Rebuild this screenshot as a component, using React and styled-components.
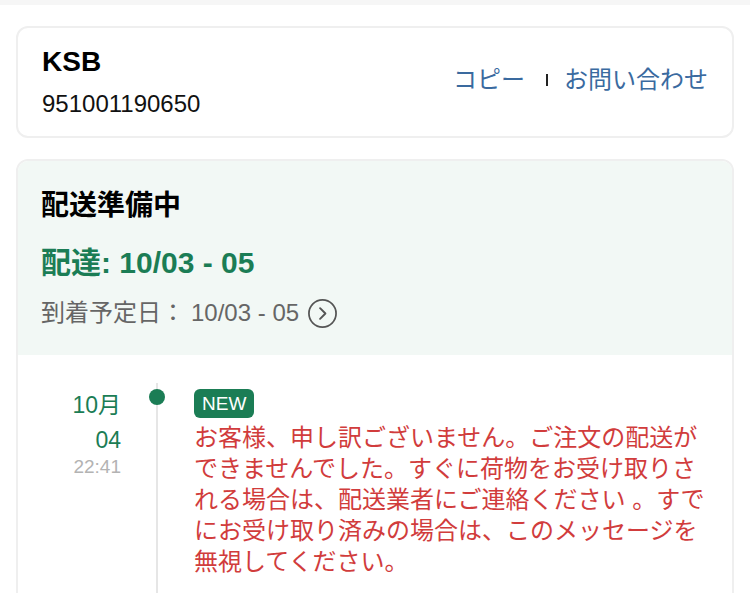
import React from "react";
import styled, { createGlobalStyle } from "styled-components";

const GlobalStyle = createGlobalStyle`
  * { box-sizing: border-box; }
  body {
    margin: 0;
    background: #ffffff;
    font-family: "Liberation Sans", "Noto Sans CJK JP", sans-serif;
    color: #111;
  }
`;

const green = "#1b7d55";

const TopStrip = styled.div`
  height: 5px;
  background: #f6f6f6;
`;

const Page = styled.main`
  padding: 21px 16px 0;
  display: flex;
  flex-direction: column;
  gap: 21px;
`;

const Card = styled.section`
  border: 2px solid #efefef;
  border-radius: 12px;
  overflow: hidden;
  background: #fff;
`;

const CarrierCard = styled(Card)`
  display: flex;
  align-items: center;
  justify-content: space-between;
  padding: 17px 24px;
`;

const CarrierInfo = styled.div`
  display: flex;
  flex-direction: column;
  gap: 10px;
`;

const CarrierName = styled.div`
  font-size: 28px;
  line-height: 34px;
  font-weight: 700;
  color: #000;
`;

const TrackingNo = styled.div`
  font-size: 24px;
  line-height: 30px;
  color: #111;
`;

const Links = styled.div`
  display: flex;
  align-items: center;
  margin-top: -4px;
`;

const LinkText = styled.a`
  font-size: 24px;
  line-height: 30px;
  color: #3a6a9f;
  text-decoration: none;
`;

const Separator = styled.span`
  width: 2px;
  height: 12px;
  background: #222;
  margin: 0 16px 0 21px;
`;

const StatusHeader = styled.div`
  background: #f2f8f5;
  padding: 25px 23px 25px;
  display: flex;
  flex-direction: column;
`;

const StatusTitle = styled.h2`
  margin: 0;
  font-size: 28px;
  line-height: 40px;
  font-weight: 700;
  color: #000;
`;

const Delivery = styled.div`
  margin-top: 17px;
  font-size: 30px;
  line-height: 40px;
  font-weight: 700;
  color: ${green};
`;

const EtaRow = styled.div`
  margin-top: 13px;
  display: flex;
  align-items: center;
  font-size: 24px;
  line-height: 34px;
  color: #666;
`;

const EtaLabel = styled.span`
  margin-right: 6px;
`;

const ChevronIcon = styled.svg`
  width: 31px;
  height: 31px;
  margin-left: 8px;
`;

const Timeline = styled.div`
  padding-top: 28px;
  min-height: 260px;
`;

const Event = styled.div`
  display: flex;
  align-items: stretch;
  min-height: 240px;
`;

const DateCol = styled.div`
  width: 103px;
  text-align: right;
  padding-top: 5px;
`;

const DateText = styled.div`
  font-size: 23px;
  line-height: 35px;
  color: ${green};
`;

const TimeText = styled.div`
  font-size: 19px;
  line-height: 18px;
  color: #b3b3b3;
`;

const Rail = styled.div`
  position: relative;
  width: 72px;
  flex-shrink: 0;

  &::before {
    content: "";
    position: absolute;
    left: 35px;
    top: 0;
    bottom: 0;
    width: 2px;
    background: #e6e6e6;
  }
`;

const Dot = styled.span`
  position: absolute;
  left: 28px;
  top: 6px;
  width: 16px;
  height: 16px;
  border-radius: 50%;
  background: ${green};
`;

const EventBody = styled.div`
  flex: 1;
  padding: 6px 22px 0 1px;
`;

const Badge = styled.span`
  display: inline-flex;
  align-items: center;
  height: 29px;
  padding: 0 8px;
  border-radius: 6px;
  background: ${green};
  color: #fff;
  font-size: 19px;
`;

const Message = styled.p`
  margin: 4px 0 0;
  font-size: 24px;
  line-height: 31px;
  color: #d13c3c;
`;

export default function App() {
  return (
    <>
      <GlobalStyle />
      <TopStrip />
      <Page>
        <CarrierCard>
          <CarrierInfo>
            <CarrierName>KSB</CarrierName>
            <TrackingNo>951001190650</TrackingNo>
          </CarrierInfo>
          <Links>
            <LinkText href="#">コピー</LinkText>
            <Separator />
            <LinkText href="#">お問い合わせ</LinkText>
          </Links>
        </CarrierCard>

        <Card>
          <StatusHeader>
            <StatusTitle>配送準備中</StatusTitle>
            <Delivery>配達: 10/03 - 05</Delivery>
            <EtaRow>
              <EtaLabel>到着予定日：</EtaLabel>
              <span>10/03 - 05</span>
              <ChevronIcon viewBox="0 0 32 32" fill="none">
                <circle cx="16" cy="16" r="14" stroke="#555" strokeWidth="1.8" />
                <path
                  d="M13.5 10.5 L19 16 L13.5 21.5"
                  stroke="#555"
                  strokeWidth="2"
                  strokeLinecap="round"
                  strokeLinejoin="round"
                />
              </ChevronIcon>
            </EtaRow>
          </StatusHeader>

          <Timeline>
            <Event>
              <DateCol>
                <DateText>
                  <div>10月</div>
                  <div>04</div>
                </DateText>
                <TimeText>22:41</TimeText>
              </DateCol>
              <Rail>
                <Dot />
              </Rail>
              <EventBody>
                <Badge>NEW</Badge>
                <Message>
                  お客様、申し訳ございません。ご注文の配送ができませんでした。すぐに荷物をお受け取りされる場合は、配送業者にご連絡ください 。すでにお受け取り済みの場合は、このメッセージを無視してください。
                </Message>
              </EventBody>
            </Event>
          </Timeline>
        </Card>
      </Page>
    </>
  );
}
